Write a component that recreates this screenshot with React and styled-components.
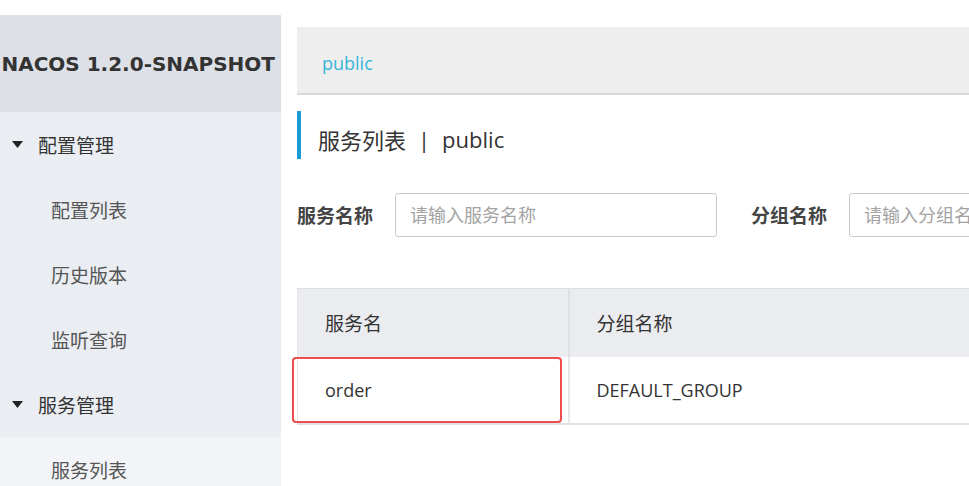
import React from 'react';
import styled, { createGlobalStyle } from 'styled-components';

const GlobalStyle = createGlobalStyle`
  html, body {
    margin: 0;
    padding: 0;
    background: #fff;
    overflow: hidden;
  }
  body {
    font-family: "Open Sans", "Noto Sans CJK SC", sans-serif;
    color: #333;
  }
`;

const menu = [
  { label: '配置管理', parent: true },
  { label: '配置列表' },
  { label: '历史版本' },
  { label: '监听查询' },
  { label: '服务管理', parent: true },
  { label: '服务列表', active: true },
];

const Page = styled.div`
  display: flex;
  width: 969px;
  height: 486px;
  overflow: hidden;
`;

const Sidebar = styled.aside`
  width: 281px;
  flex-shrink: 0;
  margin-top: 15px;
  background: #eaedf1;
  display: flex;
  flex-direction: column;
`;

const Brand = styled.div`
  height: 97px;
  flex-shrink: 0;
  background: #dde1e7;
  display: flex;
  align-items: center;
  justify-content: flex-end;
  padding-right: 6px;
  overflow: hidden;
  white-space: nowrap;
  font-family: "DejaVu Sans", sans-serif;
  font-size: 20px;
  font-weight: 700;
  color: #333;
`;

const MenuItem = styled.div`
  height: 65px;
  flex-shrink: 0;
  display: flex;
  align-items: center;
  padding-left: ${p => (p.$parent ? '12px' : '51px')};
  background: ${p => (p.$active ? '#f3f4f7' : 'transparent')};
  font-size: 19px;
  color: ${p => (p.$parent ? '#333' : '#555')};
`;

const Caret = styled.svg`
  width: 11px;
  height: 7px;
  margin-right: 15px;
`;

const Main = styled.main`
  flex: 1;
  min-width: 0;
  padding: 27px 0 0 16px;
  overflow: hidden;
`;

const Breadcrumb = styled.div`
  box-sizing: border-box;
  height: 68px;
  background: #eeeeee;
  border-bottom: 2px solid #d9d9d9;
  display: flex;
  align-items: center;
  padding: 5px 0 0 25px;
  font-size: 18px;
  color: #35b6d8;
`;

const Title = styled.h1`
  box-sizing: border-box;
  margin: 16px 0 0;
  height: 48px;
  border-left: 4px solid #1a9bd3;
  padding: 7px 0 0 17px;
  display: flex;
  align-items: center;
  font-size: 22px;
  font-weight: 400;
  color: #333;
  white-space: nowrap;
`;

const Sep = styled.span`
  margin: 0 12px;
`;

const SearchRow = styled.div`
  margin-top: 34px;
  display: flex;
  align-items: center;
  white-space: nowrap;
`;

const Field = styled.div`
  display: flex;
  align-items: center;
  flex-shrink: 0;
  margin-right: 34px;
`;

const Label = styled.label`
  font-size: 19px;
  font-weight: 700;
  color: #444;
  margin-right: 22px;
`;

const Input = styled.input`
  box-sizing: border-box;
  width: 322px;
  height: 44px;
  border: 1px solid #c8cad1;
  border-radius: 3px;
  padding: 0 14px;
  font-family: inherit;
  font-size: 18px;
  color: #333;
  outline: none;
  &::placeholder {
    color: #a3a3a3;
  }
`;

const Table = styled.table`
  margin-top: 51px;
  width: 900px;
  border-collapse: collapse;
  table-layout: fixed;
  font-size: 19px;
`;

const Th = styled.th`
  height: 68px;
  background: #ebecf0;
  border-top: 1px solid #dcdee3;
  border-left: ${p => (p.$first ? '1px solid #e3e5ea' : '2px solid #dfe1e6')};
  text-align: left;
  font-weight: 400;
  padding: 0 0 0 27px;
  color: #333;
`;

const Td = styled.td`
  position: relative;
  height: 66px;
  border-bottom: 2px solid #dfe1e6;
  border-left: ${p => (p.$first ? '1px solid #e3e5ea' : '2px solid #e6e7eb')};
  padding: 0 0 0 27px;
  color: #333;
  font-size: 18px;
`;

const Highlight = styled.span`
  position: absolute;
  left: -6px;
  top: 0;
  width: 270px;
  height: 66px;
  box-sizing: border-box;
  border: 2px solid #ee4d4d;
  border-radius: 4px;
  pointer-events: none;
`;

export default function App() {
  return (
    <Page>
      <GlobalStyle />
      <Sidebar>
        <Brand>NACOS 1.2.0-SNAPSHOT</Brand>
        {menu.map(item => (
          <MenuItem key={item.label} $parent={item.parent} $active={item.active}>
            {item.parent && (
              <Caret viewBox="0 0 11 7">
                <path d="M0 0 L11 0 L5.5 7 Z" fill="#222" />
              </Caret>
            )}
            {item.label}
          </MenuItem>
        ))}
      </Sidebar>
      <Main>
        <Breadcrumb>public</Breadcrumb>
        <Title>
          服务列表<Sep>|</Sep>public
        </Title>
        <SearchRow>
          <Field>
            <Label>服务名称</Label>
            <Input placeholder="请输入服务名称" />
          </Field>
          <Field>
            <Label>分组名称</Label>
            <Input placeholder="请输入分组名称" />
          </Field>
        </SearchRow>
        <Table>
          <colgroup>
            <col style={{ width: 271 }} />
            <col />
          </colgroup>
          <thead>
            <tr>
              <Th $first>服务名</Th>
              <Th>分组名称</Th>
            </tr>
          </thead>
          <tbody>
            <tr>
              <Td $first>
                <Highlight />
                order
              </Td>
              <Td>DEFAULT_GROUP</Td>
            </tr>
          </tbody>
        </Table>
      </Main>
    </Page>
  );
}
